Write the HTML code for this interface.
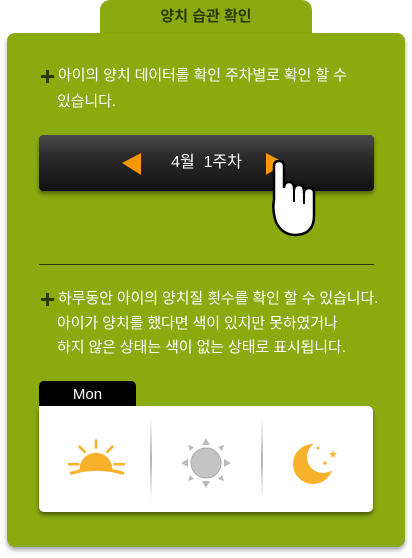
<!DOCTYPE html>
<html><head><meta charset="utf-8"><style>
body{margin:0;width:412px;height:558px;background:#fff;position:relative;overflow:hidden;font-family:"Liberation Sans","Noto Sans CJK KR",sans-serif}
.tab{position:absolute;left:100px;top:0;width:212px;height:40px;background:#8aab0f;border-radius:10px 10px 0 0;text-align:center;font-weight:bold;font-size:15px;color:#2d3a05;line-height:34px}
.panel{position:absolute;left:7px;top:33px;width:398px;height:514px;background:#8aab0f;border-radius:8px;box-shadow:0 3px 5px rgba(0,0,0,.35)}
.t{position:absolute;color:#fff;font-size:15px;line-height:25px;letter-spacing:-0.1px;white-space:nowrap}
.plus{position:absolute;width:13px;height:13px}
.bar{position:absolute;left:39px;top:135px;width:335px;height:56px;border-radius:4px;background:linear-gradient(#4a4a4a,#2a2a2a 40%,#111);box-shadow:0 3px 4px rgba(0,0,0,.4);color:#fff;font-size:16px;text-align:center;line-height:56px}
.line{position:absolute;left:39px;top:264px;width:335px;height:1px;background:#2d3a05}
.mon{position:absolute;left:39px;top:381px;width:97px;height:27px;background:#000;border-radius:5px 5px 0 0;color:#fff;font-size:15px;text-align:center;line-height:27px}
.card{position:absolute;left:39px;top:406px;width:334px;height:106px;background:#fff;border-radius:0 5px 5px 5px;box-shadow:0 3px 4px rgba(0,0,0,.45)}
.sep{position:absolute;top:12px;width:2px;height:82px;background:linear-gradient(rgba(0,0,0,0),rgba(0,0,0,.3),rgba(0,0,0,0))}
</style></head><body>
<div class="tab">양치 습관 확인</div>
<div class="panel"></div>
<svg class="plus" style="left:41px;top:70px" viewBox="0 0 13 13"><path d="M5,0H8V5H13V8H8V13H5V8H0V5H5Z" fill="#2d3a05"/></svg>
<div class="t" style="left:58px;top:63px">아이의 양치 데이터를 확인 주차별로 확인 할 수</div>
<div class="t" style="left:57px;top:89px">있습니다.</div>
<div class="bar">4월&nbsp; 1주차</div>
<svg style="position:absolute;left:120px;top:152px" width="22" height="24"><polygon points="2,11 21,1 21,23" fill="#f39800"/></svg>
<svg style="position:absolute;left:265px;top:152px" width="22" height="24"><polygon points="20,11 1,1 1,23" fill="#f39800"/></svg>
<svg style="position:absolute;left:268px;top:160px" width="54" height="78" viewBox="0 0 54 78"><path d="M6,6 Q6,1 11,1 Q16,1 16,6 L16,28 Q16,22 21,22 Q26,22 26,28 L26,30 Q26,25 31,25 Q36,25 36,31 L36,33 Q36,28 41,28 Q46,28 46,33 L46,56 Q46,74 28,75 Q14,75 8,62 Q4,50 6,40 Z" fill="#fff" stroke="#000" stroke-width="2.5"/><path d="M26,30 L26,42 M36,33 L36,44" stroke="#000" stroke-width="2"/></svg>
<div class="line"></div>
<svg class="plus" style="left:41px;top:293px" viewBox="0 0 13 13"><path d="M5,0H8V5H13V8H8V13H5V8H0V5H5Z" fill="#2d3a05"/></svg>
<div class="t" style="left:58px;top:286px">하루동안 아이의 양치질 횟수를 확인 할 수 있습니다.</div>
<div class="t" style="left:57px;top:311px">아이가 양치를 했다면 색이 있지만 못하였거나</div>
<div class="t" style="left:57px;top:335px">하지 않은 상태는 색이 없는 상태로 표시됩니다.</div>
<div class="mon">Mon</div>
<div class="card">
<div class="sep" style="left:111px"></div><div class="sep" style="left:222px"></div>
<svg style="position:absolute;left:27px;top:32px" width="62" height="42" viewBox="0 0 60 40"><g stroke="#f8b12a" stroke-width="2.5" stroke-linecap="round"><line x1="29" y1="2" x2="29" y2="9"/><line x1="13" y1="8" x2="18" y2="13"/><line x1="45" y1="8" x2="40" y2="13"/><line x1="3" y1="25" x2="12" y2="25"/><line x1="47" y1="25" x2="56" y2="25"/></g><path d="M13,30 A16,16 0 0 1 45,30 Z" fill="#f8b12a"/><path d="M4,34 Q30,26 56,34" stroke="#f8b12a" stroke-width="3" fill="none"/></svg>
<svg style="position:absolute;left:140px;top:30px" width="54" height="54" viewBox="0 0 54 54"><circle cx="27" cy="27" r="15" fill="#c4c4c4" stroke="#aaa"/><g fill="#bbb"><polygon points="27,2 23,9 31,9"/><polygon points="27,52 23,45 31,45"/><polygon points="2,27 9,23 9,31"/><polygon points="52,27 45,23 45,31"/><polygon points="9,9 15,11 11,15"/><polygon points="45,9 39,11 43,15"/><polygon points="9,45 15,43 11,39"/><polygon points="45,45 39,43 43,39"/></g></svg>
<svg style="position:absolute;left:254px;top:32px" width="48" height="50" viewBox="0 0 48 50"><circle cx="20" cy="26" r="20" fill="#f8b12a"/><circle cx="30" cy="19" r="16" fill="#fff"/><circle cx="25" cy="10" r="1.4" fill="#f8b12a"/><polygon points="40,12 41,15 44,15 41.5,17 42.5,20 40,18 37.5,20 38.5,17 36,15 39,15" fill="#f8b12a"/><circle cx="32" cy="25" r="1.6" fill="#f8b12a"/></svg>
</div>
</body></html>
